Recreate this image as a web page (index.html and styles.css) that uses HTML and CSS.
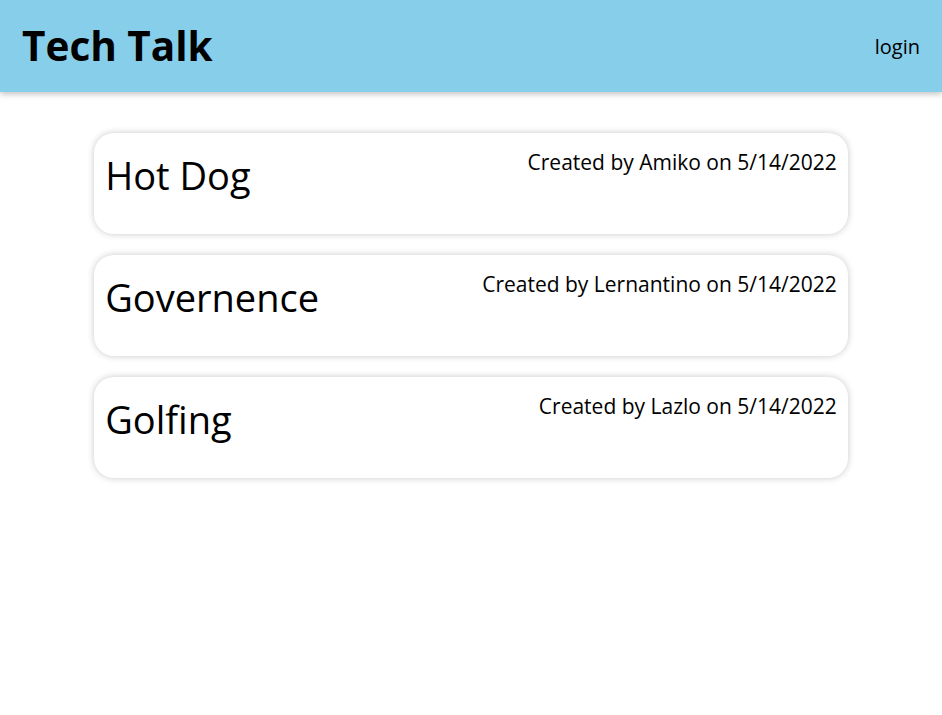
FILE: index.html
```html
<!DOCTYPE html>
<html lang="en">
<head>
<meta charset="utf-8">
<title>Tech Talk</title>
<link rel="stylesheet" href="styles.css">
</head>
<body>
<header class="site-header">
  <h1 class="brand">Tech Talk</h1>
  <nav class="nav"><a class="nav-link" href="#">login</a></nav>
</header>
<main class="posts">
  <article class="post">
    <h2 class="post-title">Hot Dog</h2>
    <p class="post-meta">Created by Amiko on 5/14/2022</p>
  </article>
  <article class="post">
    <h2 class="post-title">Governence</h2>
    <p class="post-meta">Created by Lernantino on 5/14/2022</p>
  </article>
  <article class="post">
    <h2 class="post-title">Golfing</h2>
    <p class="post-meta">Created by Lazlo on 5/14/2022</p>
  </article>
</main>
</body>
</html>
```

FILE: styles.css
```css
* { box-sizing: border-box; }
html, body { margin: 0; padding: 0; background: #fff; }
body {
  font-family: "Open Sans", "Noto Sans", Arial, sans-serif;
  color: #000;
}
.site-header {
  height: 92px;
  background: #87ceeb;
  display: flex;
  align-items: center;
  justify-content: space-between;
  padding: 0 22px 0 22px;
  box-shadow: 0 2px 6px rgba(0,0,0,0.25);
}
.brand {
  margin: 0;
  font-size: 40.5px;
  font-weight: 700;
  line-height: 1;
}
.nav-link {
  color: #000;
  text-decoration: none;
  font-size: 20px;
}
.posts {
  width: 80%;
  margin: 41px auto 0;
  padding-bottom: 20px;
  display: flex;
  flex-direction: column;
  gap: 21px;
}
.post {
  height: 101px;
  background: #fff;
  border-radius: 20px;
  box-shadow: 0 0 7px rgba(0,0,0,0.22);
  padding: 10px 11px;
  display: flex;
  justify-content: space-between;
  align-items: flex-start;
}
.post-title {
  margin: 8px 0 0;
  font-size: 38px;
  font-weight: 400;
  line-height: 48px;
}
.post-meta {
  margin: 5px 0 0;
  font-size: 21px;
  line-height: 28px;
}
```
